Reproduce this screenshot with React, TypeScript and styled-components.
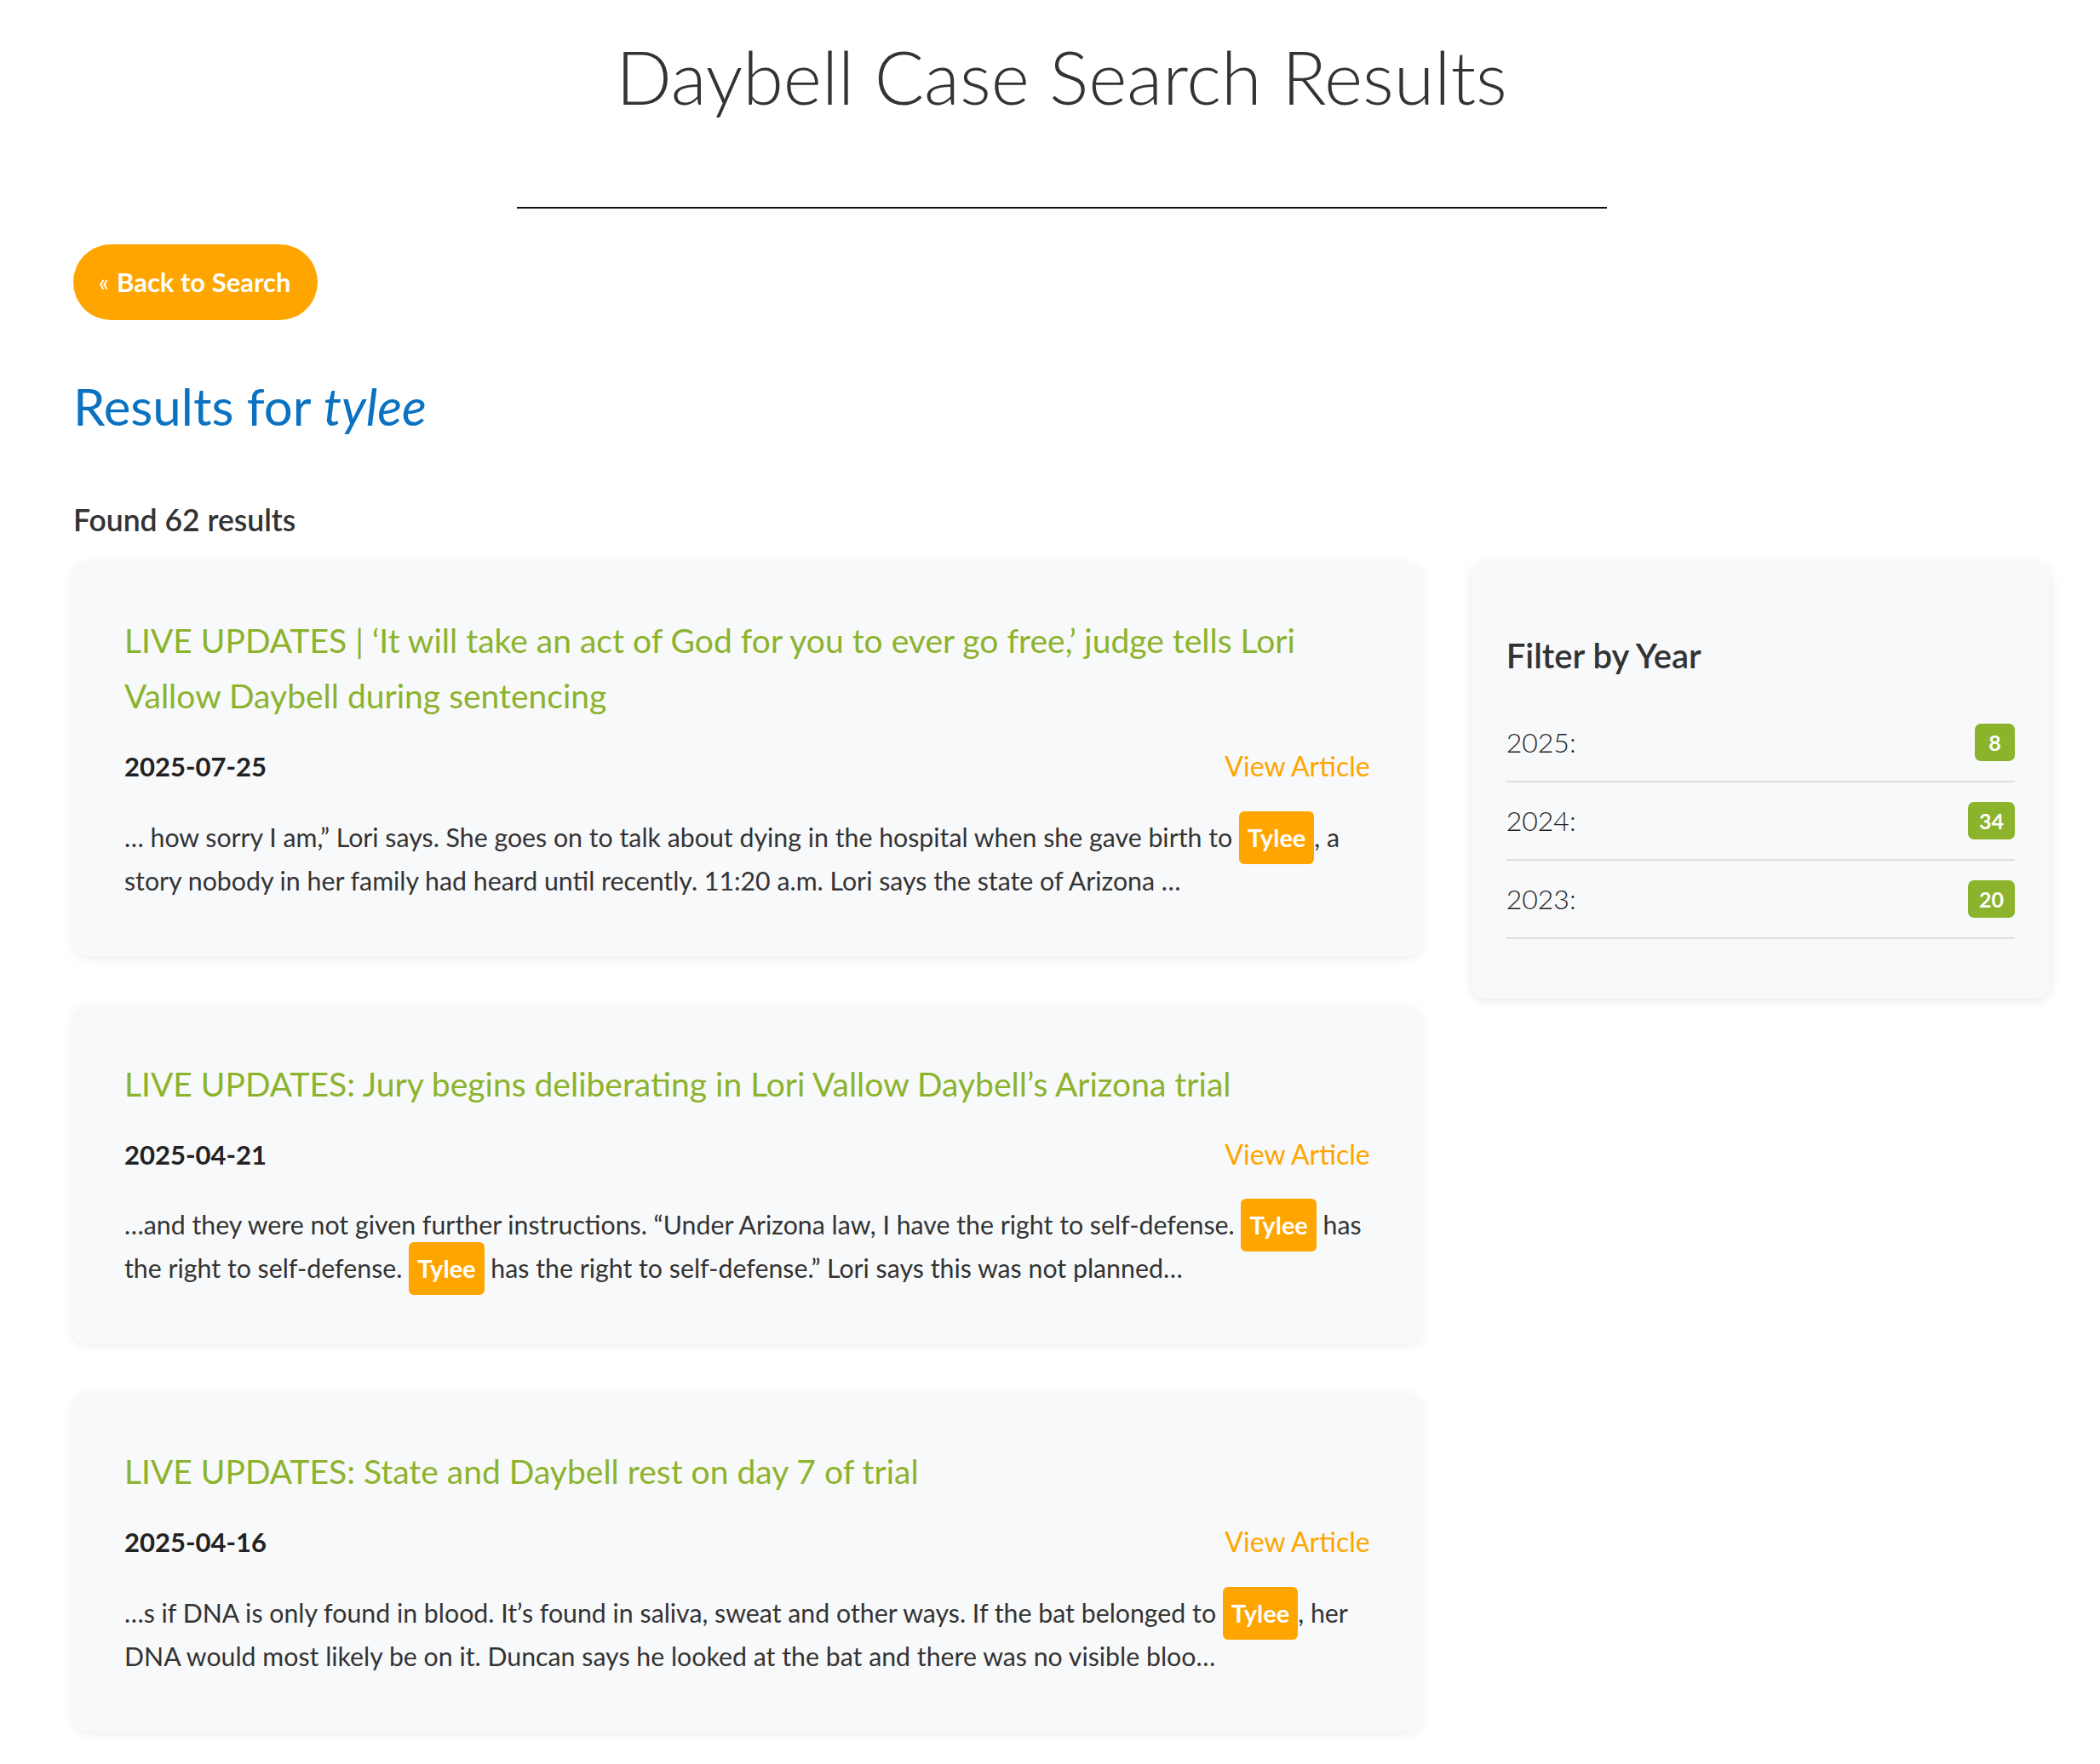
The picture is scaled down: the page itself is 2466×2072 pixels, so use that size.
import React from 'react';
import styled, { createGlobalStyle } from 'styled-components';

const GlobalStyle = createGlobalStyle`
	html, body {
		margin: 0;
		padding: 0;
		background: #ffffff;
	}
	body {
		font-family: Lato, "Noto Sans", "Liberation Sans", sans-serif;
		color: #333333;
	}
	* {
		box-sizing: border-box;
	}
`;

const Page = styled.div`
	padding: 38px 59px 40px 86px;
`;

const Title = styled.h1`
	margin: 0;
	font-size: 86.5px;
	font-weight: 300;
	line-height: 1.2;
	text-align: center;
	color: #333333;
`;

const Rule = styled.hr`
	width: 1280px;
	margin: 101px auto 0;
	border: 0;
	border-top: 2px solid #111111;
`;

const BackButton = styled.a`
	display: inline-flex;
	align-items: center;
	gap: 9px;
	height: 89px;
	margin-top: 42px;
	padding: 0 31px 0 30px;
	border-radius: 45px;
	background: #ffa500;
	color: #ffffff;
	font-size: 31px;
	font-weight: 700;
	text-decoration: none;
`;

const Chevrons = styled.span`
	font-size: 28px;
	font-weight: 400;
`;

const ResultsFor = styled.h2`
	margin: 65px 0 0;
	font-size: 60px;
	font-weight: 400;
	line-height: 1.2;
	color: #0a72c0;

	em {
		font-style: italic;
	}
`;

const Found = styled.p`
	margin: 77px 0 0;
	font-size: 35.5px;
	font-weight: 600;
	line-height: 1.2;
	color: #333333;
`;

const Layout = styled.div`
	display: grid;
	grid-template-columns: 7fr 3fr;
	gap: 60px;
	align-items: start;
	margin-top: 30px;
`;

const ResultList = styled.div`
	display: flex;
	flex-direction: column;
	gap: 60px;
`;

const Card = styled.article`
	padding: 58px 60px 63px;
	border-radius: 16px;
	background: #f8f9fa;
	box-shadow: 0 2px 14px rgba(0, 0, 0, 0.08);
`;

const CardTitle = styled.h3`
	margin: 0;
	font-size: 39px;
	font-weight: 400;
	line-height: 65px;
	color: #8cb32c;
`;

const MetaRow = styled.div`
	display: flex;
	justify-content: space-between;
	align-items: baseline;
	margin-top: 31px;
	line-height: 1.2;
`;

const DateText = styled.span`
	font-size: 31px;
	font-weight: 700;
	color: #222222;
`;

const ViewLink = styled.a`
	font-size: 32px;
	color: #ffa500;
	text-decoration: none;
`;

const Snippet = styled.p`
	margin: 38px 0 0;
	font-size: 30.3px;
	line-height: 51px;
	color: #333333;
`;

const Mark = styled.mark`
	padding: 13px 10px 14px;
	border-radius: 6px;
	background: #ffa500;
	color: #ffffff;
	font-size: 29px;
	font-weight: 700;
`;

const Sidebar = styled.aside`
	padding: 40px 41px 70px 40px;
	border-radius: 16px;
	background: #f8f9fa;
	box-shadow: 0 2px 14px rgba(0, 0, 0, 0.1);
`;

const SidebarTitle = styled.h3`
	margin: 44px 0 33px;
	font-size: 40px;
	font-weight: 600;
	line-height: 1.2;
	color: #333333;
`;

const YearList = styled.ul`
	margin: 0;
	padding: 0;
	list-style: none;
`;

const YearRow = styled.li`
	display: flex;
	justify-content: space-between;
	align-items: center;
	padding: 23px 0;
	border-bottom: 2px solid #dcdee0;
	font-size: 32px;
	font-weight: 300;
	line-height: 1.2;
	color: #1f1f1f;
`;

const Badge = styled.span`
	display: inline-flex;
	align-items: center;
	justify-content: center;
	height: 44px;
	min-width: 47px;
	padding: 0 13px;
	border-radius: 7px;
	background: #8cb32c;
	color: #ffffff;
	font-size: 25px;
	font-weight: 700;
`;

type Part = string | { hit: string };

type Result = {
	title: string;
	date: string;
	snippet: Part[];
};

const results: Result[] = [
	{
		title:
			'LIVE UPDATES | \u2018It will take an act of God for you to ever go free,\u2019 judge tells Lori Vallow Daybell during sentencing',
		date: '2025-07-25',
		snippet: [
			'\u2026 how sorry I am,\u201d Lori says. She goes on to talk about dying in the hospital when she gave birth to ',
			{ hit: 'Tylee' },
			', a story nobody in her family had heard until recently. 11:20 a.m. Lori says the state of Arizona \u2026',
		],
	},
	{
		title: 'LIVE UPDATES: Jury begins deliberating in Lori Vallow Daybell\u2019s Arizona trial',
		date: '2025-04-21',
		snippet: [
			'\u2026and they were not given further instructions. \u201cUnder Arizona law, I have the right to self-defense. ',
			{ hit: 'Tylee' },
			' has the right to self-defense. ',
			{ hit: 'Tylee' },
			' has the right to self-defense.\u201d Lori says this was not planned\u2026',
		],
	},
	{
		title: 'LIVE UPDATES: State and Daybell rest on day 7 of trial',
		date: '2025-04-16',
		snippet: [
			'\u2026s if DNA is only found in blood. It\u2019s found in saliva, sweat and other ways. If the bat belonged to ',
			{ hit: 'Tylee' },
			', her DNA would most likely be on it. Duncan says he looked at the bat and there was no visible bloo\u2026',
		],
	},
];

const years = [
	{ year: '2025', count: 8 },
	{ year: '2024', count: 34 },
	{ year: '2023', count: 20 },
];

const App = () => {
	return (
		<>
			<GlobalStyle />
			<Page>
				<Title>Daybell Case Search Results</Title>
				<Rule />

				<BackButton href="#">
					<Chevrons>«</Chevrons>
					Back to Search
				</BackButton>

				<ResultsFor>
					Results for <em>tylee</em>
				</ResultsFor>

				<Found>Found 62 results</Found>

				<Layout>
					<ResultList>
						{results.map((r) => (
							<Card key={r.date}>
								<CardTitle>{r.title}</CardTitle>
								<MetaRow>
									<DateText>{r.date}</DateText>
									<ViewLink href="#">View Article</ViewLink>
								</MetaRow>
								<Snippet>
									{r.snippet.map((part, i) =>
										typeof part === 'string' ? (
											<React.Fragment key={i}>{part}</React.Fragment>
										) : (
											<Mark key={i}>{part.hit}</Mark>
										),
									)}
								</Snippet>
							</Card>
						))}
					</ResultList>

					<Sidebar>
						<SidebarTitle>Filter by Year</SidebarTitle>
						<YearList>
							{years.map((y) => (
								<YearRow key={y.year}>
									<span>{y.year}:</span>
									<Badge>{y.count}</Badge>
								</YearRow>
							))}
						</YearList>
					</Sidebar>
				</Layout>
			</Page>
		</>
	);
};

export default App;
